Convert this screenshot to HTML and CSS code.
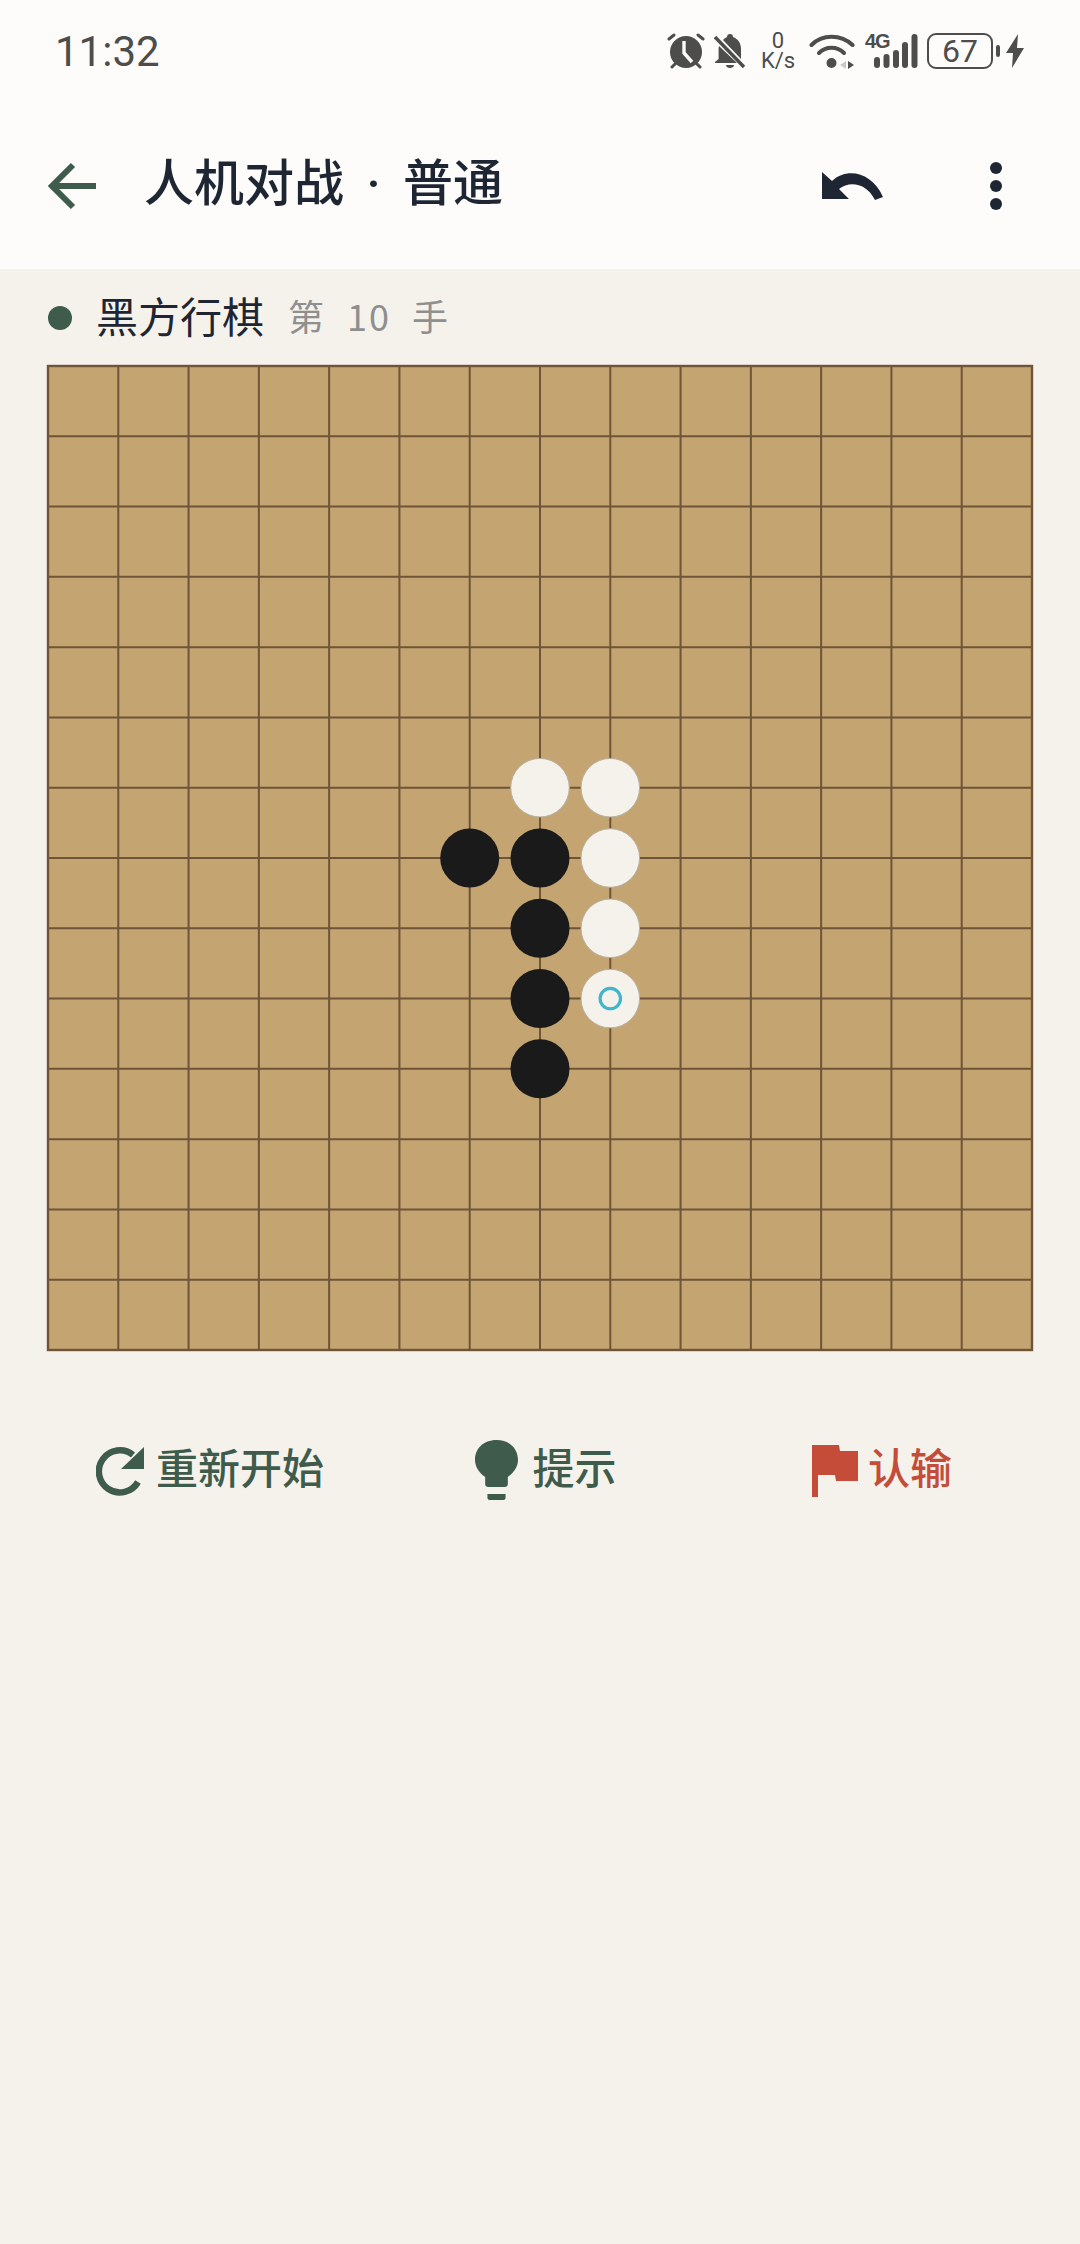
FILE: index.html
```html
<!DOCTYPE html>
<html lang="zh">
<head>
<meta charset="utf-8">
<title>人机对战</title>
<link rel="stylesheet" href="styles.css">
</head>
<body>
<div class="top">
  <div class="status">
    <span class="time">11:32</span>
    <div class="sicons">
      <svg class="s-alarm" width="38" height="36" viewBox="0 0 38 36"><g fill="none" stroke="#4d4d4b" stroke-width="3" stroke-linecap="round"><path d="M2 6 7 2M36 6 31 2M8 31l-3 3M30 31l3 3"/></g><circle cx="19" cy="19" r="16" fill="#4d4d4b"/><path d="M17 8v12l8 9" fill="none" stroke="#fdfcfa" stroke-width="3.4"/></svg>
      <svg class="s-bell" width="32" height="36" viewBox="0 0 32 36"><path d="M16 1c-2 0-3 1-3 3-2 1-3 2-4 3l18 19V16c0-6-3-10-8-12 0-2-1-3-3-3zM5 13c-.3 1-.4 2-.4 3v10L1 29v1h22zM12 32c0 2 2 3 4 3s4-1 4-3z" fill="#4d4d4b"/><path d="M1 4l29 30" stroke="#4d4d4b" stroke-width="3.4"/></svg>
      <span class="speed">0<br>K/s</span>
      <svg class="s-wifi" width="46" height="36" viewBox="0 0 46 36"><g fill="none" stroke="#4d4d4b" stroke-width="4" stroke-linecap="round"><path d="M2.500 12C13 1 32 1 43.500 12"/><path d="M10 20c7-7 18-7 25 0"/></g><circle cx="22.500" cy="30" r="5" fill="#4d4d4b"/><path d="M37 28l-6 4 6 4z" fill="#c9c9c7"/><path d="M39 28l6 4-6 4z" fill="#4d4d4b"/></svg>
      <div class="sig">
        <span class="g4">4G</span>
        <svg width="44" height="34" viewBox="0 0 44 34"><g fill="#4d4d4b"><rect x="0" y="23" width="6" height="11" rx="3"/><rect x="9.500" y="20" width="6" height="14" rx="3"/><rect x="19" y="16" width="6" height="18" rx="3"/><rect x="28" y="8" width="6" height="26" rx="3"/><rect x="37.500" y="0" width="6" height="34" rx="3"/></g></svg>
      </div>
      <div class="batt"><span class="batt-n">67</span></div>
      <span class="batt-cap"></span>
      <svg class="s-bolt" width="18" height="34" viewBox="0 0 18 34"><path d="M12 0 0 19h7L6 34l12-20h-7z" fill="#4d4d4b"/></svg>
    </div>
  </div>
  <header class="bar">
    <svg class="back" width="50" height="50" viewBox="0 0 50 50"><path d="M49 25H6M26 4 5 25l21 21" fill="none" stroke="#3f5b4b" stroke-width="6"/></svg>
    <h1 class="title">人机对战<span class="sep">·</span>普通</h1>
    <svg class="undo" width="62" height="30" viewBox="0 0 62 28"><path d="M0 0v27h27l-10-10c10-8 27-7 36 11l8-3C50 0 25-5 10 9z" fill="#1f2633"/></svg>
    <div class="more"><i></i><i></i><i></i></div>
  </header>
</div>

<main class="page">
  <div class="turn">
    <span class="dot"></span>
    <span class="who">黑方行棋</span>
    <span class="count">第 10 手</span>
  </div>

  <svg class="board" width="988" height="988" viewBox="0 0 988 988">
    <rect x="2" y="2" width="984" height="984" fill="#c4a572" stroke="#6f5438" stroke-width="2.400"/>
    <g stroke="#6f5438" stroke-width="2">
      <path d="M72.290 2v984M142.570 2v984M212.860 2v984M283.140 2v984M353.430 2v984M423.710 2v984M494 2v984M564.290 2v984M634.570 2v984M704.860 2v984M775.140 2v984M845.430 2v984M915.710 2v984"/>
      <path d="M2 72.290h984M2 142.570h984M2 212.860h984M2 283.140h984M2 353.430h984M2 423.710h984M2 494h984M2 564.290h984M2 634.570h984M2 704.860h984M2 775.140h984M2 845.430h984M2 915.710h984"/>
    </g>
    <g fill="#f5f2ec" stroke="#b8b0a0" stroke-width="1">
      <circle cx="494" cy="423.710" r="29.300"/>
      <circle cx="564.290" cy="423.710" r="29.300"/>
      <circle cx="564.290" cy="494" r="29.300"/>
      <circle cx="564.290" cy="564.290" r="29.300"/>
      <circle cx="564.290" cy="634.570" r="29.300"/>
    </g>
    <g fill="#1a1a1a">
      <circle cx="423.710" cy="494" r="29.500"/>
      <circle cx="494" cy="494" r="29.500"/>
      <circle cx="494" cy="564.290" r="29.500"/>
      <circle cx="494" cy="634.570" r="29.500"/>
      <circle cx="494" cy="704.860" r="29.500"/>
    </g>
    <circle cx="564.290" cy="634.570" r="10.200" fill="none" stroke="#40b5cb" stroke-width="3.200"/>
  </svg>

  <div class="actions">
    <button class="act">
      <svg width="50" height="50" viewBox="0 0 50 50"><path d="M42 36A21 21 0 1 1 37 9" fill="none" stroke="#3f5b4b" stroke-width="6.500"/><path d="M48 1v22H25z" fill="#3f5b4b"/></svg>
      <span>重新开始</span>
    </button>
    <button class="act">
      <svg class="bulb" width="43" height="62" viewBox="2 0 38 62" preserveAspectRatio="none"><path d="M21 0C9 0 2 9 2 20c0 7 4 13 9 17v7c0 2 1 3 3 3h14c2 0 3-1 3-3v-7c5-4 9-10 9-17C40 9 33 0 21 0zM13 54h16v4c0 1-1 2-2 2H15c-1 0-2-1-2-2z" fill="#3f5b4b"/></svg>
      <span>提示</span>
    </button>
    <button class="act act-red">
      <svg width="46" height="52" viewBox="0 0 46 52"><path d="M0 0h27l1 6h18v30H24l-1-6H6v22H0z" fill="#c44c38"/></svg>
      <span>认输</span>
    </button>
  </div>
</main>
</body>
</html>
```
FILE: styles.css
```css
* { box-sizing: border-box; }
html, body { margin: 0; padding: 0; }
body {
  width: 1080px;
  height: 2244px;
  background: #f5f2ec;
  font-family: "Noto Sans CJK SC", Roboto, sans-serif;
  color: #1f2633;
  overflow: hidden;
}
.top { background: #fdfcfa; height: 269px; }
.status {
  height: 102px;
  padding: 0 0 0 55px;
  display: flex;
  align-items: center;
  justify-content: space-between;
}
.time { font-family: Roboto, sans-serif; font-size: 42px; color: #4d4d4b; }
.sicons { display: flex; align-items: center; width: 409px; height: 40px; flex: none; }
.s-alarm { margin: 0 0 0 -4px; flex: none; }
.s-bell { margin-left: 9px; flex: none; }
.speed { display: block; width: 36px; margin-left: 14px; color: #4d4d4b; font-family: Roboto, sans-serif; font-size: 22px; line-height: 20px; text-align: center; white-space: nowrap; flex: none; }
.s-wifi { margin-left: 13px; flex: none; }
.sig { display: flex; position: relative; width: 52px; height: 36px; margin-left: 11px; flex: none; }
.sig svg { position: absolute; right: 0; top: 1px; }
.g4 { position: absolute; left: -1px; top: -2px; font-family: "Liberation Sans", sans-serif; font-size: 20px; font-weight: 700; color: #4d4d4b; line-height: 20px; letter-spacing: -1px; }
.batt { width: 66px; height: 36px; border: 2.500px solid #4d4d4b; border-radius: 9px; margin-left: 9px; display: flex; align-items: center; justify-content: center; flex: none; }
.batt-n { font-family: Roboto, sans-serif; font-size: 32px; color: #4d4d4b; line-height: 1; }
.batt-cap { width: 4px; height: 12px; background: #4d4d4b; border-radius: 2px; margin-left: 3px; flex: none; }
.s-bolt { margin-left: 6px; flex: none; }

.bar { height: 167px; display: flex; align-items: center; padding-left: 47px; }
.back { flex: none; }
.title { margin: 0 0 0 47px; padding-bottom: 8px; font-size: 50px; font-weight: 500; line-height: 60px; white-space: nowrap; flex: 1; }
.sep { display: inline-block; width: 59px; text-align: center; font-family: Roboto, sans-serif; font-weight: 500; font-size: 50px; }
.undo { flex: none; margin-right: 106px; }
.more { flex: none; width: 12px; margin-right: 78px; display: flex; flex-direction: column; gap: 6px; }
.more i { display: block; width: 12px; height: 12px; border-radius: 50%; background: #1f2633; }

.page { padding: 0 46px; }
.turn { height: 95px; padding: 0 0 0 2px; display: flex; align-items: center; }
.dot { width: 24px; height: 24px; border-radius: 50%; background: #3f5b4b; margin-top: 2px; }
.who { font-size: 42px; margin-left: 24px; line-height: 1; padding-bottom: 3px; }
.count { font-size: 36px; margin-left: 24px; color: #8f8f8f; letter-spacing: 2px; word-spacing: 11px; line-height: 1; padding-bottom: 3px; }
.board { display: block; }
.actions { display: grid; grid-template-columns: repeat(3, 336px); margin: 84px 0 0 -4px; height: 70px; }
.act { background: none; border: 0; padding: 0; font: inherit; font-size: 42px; font-weight: 500; color: #3f5b4b; display: flex; align-items: center; justify-content: center; gap: 10px; }
.act span { line-height: 1; padding-bottom: 10px; }
.bulb { margin-right: 4px; }
.act-red { color: #c44c38; }
```
